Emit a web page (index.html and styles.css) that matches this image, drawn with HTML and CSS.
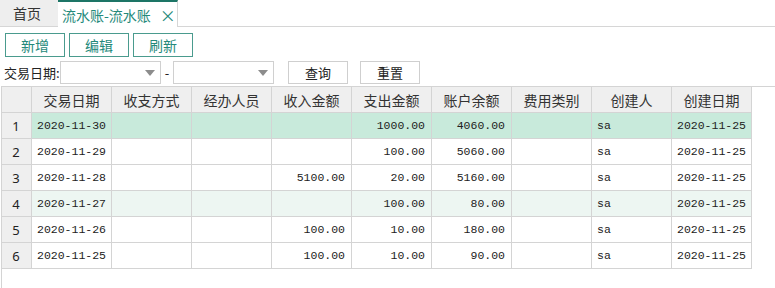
FILE: index.html
```html
<!DOCTYPE html>
<html lang="zh-CN">
<head>
  <meta charset="UTF-8" />
  <title>流水账</title>
  <link rel="stylesheet" href="styles.css">
</head>
<body>

  <div class="tabs">
    <div class="tab">首页</div>
    <div class="tab active"><span>流水账-流水账</span><span class="close">×</span></div>
    <div class="tab-rest"></div>
  </div>

  <div class="toolbar">
    <button class="btn-op">新增</button>
    <button class="btn-op">编辑</button>
    <button class="btn-op">刷新</button>
  </div>

  <div class="filter">
    <label>交易日期:</label>
    <div class="combo"><span class="arrow"></span></div>
    <span class="dash">-</span>
    <div class="combo"><span class="arrow"></span></div>
    <button class="btn-q">查询</button>
    <button class="btn-q">重置</button>
  </div>

  <div class="grid">
    <table>
      <colgroup>
        <col class="c-num">
        <col><col><col><col><col><col><col><col><col>
      </colgroup>
      <thead>
        <tr>
          <th></th>
          <th>交易日期</th>
          <th>收支方式</th>
          <th>经办人员</th>
          <th>收入金额</th>
          <th>支出金额</th>
          <th>账户余额</th>
          <th>费用类别</th>
          <th>创建人</th>
          <th>创建日期</th>
        </tr>
      </thead>
      <tbody>
        <tr class="selected">
          <td class="num">1</td><td>2020-11-30</td><td></td><td></td><td class="r"></td>
          <td class="r">1000.00</td><td class="r">4060.00</td><td></td><td>sa</td><td>2020-11-25</td>
        </tr>
        <tr>
          <td class="num">2</td><td>2020-11-29</td><td></td><td></td><td class="r"></td>
          <td class="r">100.00</td><td class="r">5060.00</td><td></td><td>sa</td><td>2020-11-25</td>
        </tr>
        <tr>
          <td class="num">3</td><td>2020-11-28</td><td></td><td></td><td class="r">5100.00</td>
          <td class="r">20.00</td><td class="r">5160.00</td><td></td><td>sa</td><td>2020-11-25</td>
        </tr>
        <tr class="hover">
          <td class="num">4</td><td>2020-11-27</td><td></td><td></td><td class="r"></td>
          <td class="r">100.00</td><td class="r">80.00</td><td></td><td>sa</td><td>2020-11-25</td>
        </tr>
        <tr>
          <td class="num">5</td><td>2020-11-26</td><td></td><td></td><td class="r">100.00</td>
          <td class="r">10.00</td><td class="r">180.00</td><td></td><td>sa</td><td>2020-11-25</td>
        </tr>
        <tr>
          <td class="num">6</td><td>2020-11-25</td><td></td><td></td><td class="r">100.00</td>
          <td class="r">10.00</td><td class="r">90.00</td><td></td><td>sa</td><td>2020-11-25</td>
        </tr>
      </tbody>
    </table>
  </div>

</body>
</html>
```

FILE: styles.css
```css
body {
  margin: 0;
  font-family: "Noto Sans CJK SC", sans-serif;
  font-size: 13px;
  color: #222;
  background: #fff;
  overflow: hidden;
}

/* tabs */
.tabs {
  display: flex;
  height: 27px;
}

.tab {
  height: 26px;
  line-height: 26px;
  font-size: 14px;
  padding: 0 0 0 13px;
  width: 45px;
  background: #eeeeee;
  border-bottom: 1px solid #d6d6d6;
  color: #333;
}

.tab.active {
  display: flex;
  align-items: center;
  width: 115px;
  height: 25px;
  padding: 0 0 0 4px;
  background: #fff;
  color: #24897a;
  border-top: 2px solid #1d7566;
  border-right: 1px solid #d6d6d6;
  border-bottom: none;
  white-space: nowrap;
}

.close {
  margin-left: 9px;
  font-size: 16px;
  color: #24897a;
}

.tab-rest {
  flex: 1;
  border-bottom: 1px solid #d6d6d6;
}

/* buttons */
.toolbar {
  display: flex;
  gap: 4px;
  padding: 6px 0 0 5px;
}

.btn-op {
  width: 60px;
  height: 24px;
  padding: 0;
  font-family: inherit;
  font-size: 14px;
  color: #24897a;
  background: #fff;
  border: 1px solid #4a9b8e;
  cursor: pointer;
}

.filter {
  display: flex;
  align-items: center;
  height: 23px;
  margin-top: 4px;
}

.filter label {
  margin-left: 4px;
  width: 56px;
  font-size: 13px;
}

.combo {
  position: relative;
  width: 99px;
  height: 21px;
  border: 1px solid #d0d0d0;
  background: #fff;
}

.arrow {
  position: absolute;
  right: 5px;
  top: 8px;
  border-left: 5px solid transparent;
  border-right: 5px solid transparent;
  border-top: 6px solid #8c8c8c;
}

.dash {
  width: 12px;
  text-align: center;
  font-size: 13px;
}

.btn-q {
  width: 60px;
  height: 23px;
  padding: 0;
  margin-left: 14px;
  font-family: inherit;
  font-size: 13px;
  color: #222;
  background: #fff;
  border: 1px solid #cfcfcf;
}

.btn-q + .btn-q {
  margin-left: 12px;
}

/* grid */
.grid {
  margin: 2px 0 0 1px;
  border-left: 1px solid #d4d4d4;
  border-top: 1px solid #d4d4d4;
  height: 210px;
}

table {
  border-collapse: collapse;
  table-layout: fixed;
  width: 751px;
  margin: -1px 0 0 -1px;
}

col {
  width: 80px;
}

col.c-num {
  width: 30px;
}

th, td {
  height: 25px;
  border: 1px solid #d4d4d4;
  padding: 0 5px;
  white-space: nowrap;
  overflow: hidden;
}

th {
  background: #efefef;
  font-weight: normal;
  font-size: 14px;
  color: #333;
  text-align: center;
}

td {
  font-family: "Liberation Mono", monospace;
  font-size: 11.5px;
  color: #222;
}

td.r {
  text-align: right;
  padding-right: 6px;
}

td.num {
  font-family: "Noto Sans", sans-serif;
  font-size: 13px;
  background: #efefef;
  text-align: center;
  padding: 0 1px 0 0;
}

tr.selected td {
  background: #c8eadb;
}

tr.selected td.num,
tr.hover td.num {
  background: #efefef;
}

tr.hover td {
  background: #edf6f2;
}
```
